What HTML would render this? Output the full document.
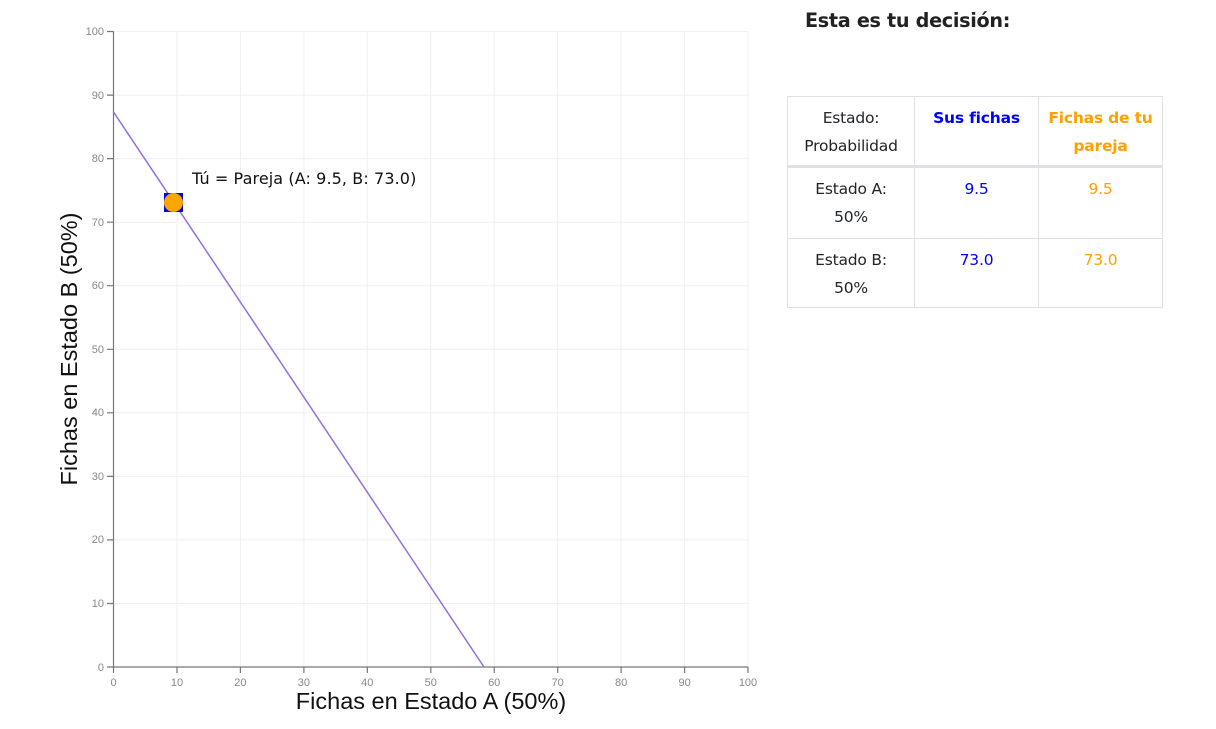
<!DOCTYPE html>
<html><head><meta charset="utf-8"><style>
body{margin:0;background:#fff;width:1216px;height:729px;overflow:hidden;position:relative;font-family:"DejaVu Sans","Liberation Sans",sans-serif}
svg{position:absolute;left:0;top:0}
h2{position:absolute;left:805px;top:9px;margin:0;font-size:19.2px;font-weight:bold;color:#222;font-family:"DejaVu Sans",sans-serif;letter-spacing:-0.3px}
.c{position:absolute;text-align:center;font-size:15.5px;line-height:28px;color:#212529;letter-spacing:-0.2px}
.b{color:#0000ff}.o{color:#ffa000}.bo{font-weight:bold}
.hl{position:absolute;background:#dee2e6}
</style></head><body>
<svg width="1216" height="729" font-family="Liberation Sans, sans-serif">
<g stroke="#efefef" stroke-width="1">
<line x1="177" y1="31.5" x2="177" y2="667"/><line x1="240.4" y1="31.5" x2="240.4" y2="667"/><line x1="303.9" y1="31.5" x2="303.9" y2="667"/><line x1="367.3" y1="31.5" x2="367.3" y2="667"/><line x1="430.8" y1="31.5" x2="430.8" y2="667"/><line x1="494.2" y1="31.5" x2="494.2" y2="667"/><line x1="557.7" y1="31.5" x2="557.7" y2="667"/><line x1="621.1" y1="31.5" x2="621.1" y2="667"/><line x1="684.6" y1="31.5" x2="684.6" y2="667"/><line x1="748" y1="31.5" x2="748" y2="667"/>
<line x1="113.5" y1="603.5" x2="748" y2="603.5"/><line x1="113.5" y1="539.9" x2="748" y2="539.9"/><line x1="113.5" y1="476.4" x2="748" y2="476.4"/><line x1="113.5" y1="412.8" x2="748" y2="412.8"/><line x1="113.5" y1="349.3" x2="748" y2="349.3"/><line x1="113.5" y1="285.7" x2="748" y2="285.7"/><line x1="113.5" y1="222.2" x2="748" y2="222.2"/><line x1="113.5" y1="158.6" x2="748" y2="158.6"/><line x1="113.5" y1="95.1" x2="748" y2="95.1"/><line x1="113.5" y1="31.5" x2="748" y2="31.5"/>
</g>
<g stroke="#777" stroke-width="1.2" fill="none">
<path d="M113.5 31.5V667H748"/>
<path d="M107 31.5h6.5M107 95.1h6.5M107 158.6h6.5M107 222.2h6.5M107 285.7h6.5M107 349.3h6.5M107 412.8h6.5M107 476.4h6.5M107 539.9h6.5M107 603.5h6.5M107 667h6.5"/>
<path d="M113.5 667v6M177 667v6M240.4 667v6M303.9 667v6M367.3 667v6M430.8 667v6M494.2 667v6M557.7 667v6M621.1 667v6M684.6 667v6M748 667v6"/>
</g>
<g fill="#888" font-size="11" text-anchor="end">
<text x="104" y="35">100</text><text x="104" y="99">90</text><text x="104" y="162">80</text><text x="104" y="226">70</text><text x="104" y="289">60</text><text x="104" y="353">50</text><text x="104" y="416">40</text><text x="104" y="480">30</text><text x="104" y="543">20</text><text x="104" y="607">10</text><text x="104" y="671">0</text>
</g>
<g fill="#888" font-size="11" text-anchor="middle">
<text x="113.5" y="686">0</text><text x="177" y="686">10</text><text x="240.4" y="686">20</text><text x="303.9" y="686">30</text><text x="367.3" y="686">40</text><text x="430.8" y="686">50</text><text x="494.2" y="686">60</text><text x="557.7" y="686">70</text><text x="621.1" y="686">80</text><text x="684.6" y="686">90</text><text x="748" y="686">100</text>
</g>
<text x="431" y="709" font-size="23.5" text-anchor="middle" fill="#111">Fichas en Estado A (50%)</text>
<text transform="translate(77,349) rotate(-90)" font-size="23.5" text-anchor="middle" fill="#111">Fichas en Estado B (50%)</text>
<line x1="113.5" y1="112" x2="484" y2="667" stroke="#9370db" stroke-width="1.5"/>
<rect x="164" y="193" width="19" height="19" fill="#0000ff"/>
<circle cx="173.5" cy="202.5" r="9.5" fill="#ffa500"/>
<text x="192" y="184" font-size="16" fill="#111" font-family="DejaVu Sans, sans-serif" letter-spacing="0.1">Tú = Pareja (A: 9.5, B: 73.0)</text>
</svg>
<h2>Esta es tu decisión:</h2>
<div class="hl" style="left:787px;top:96px;width:376px;height:1px"></div>
<div class="hl" style="left:787px;top:165px;width:376px;height:3px"></div>
<div class="hl" style="left:787px;top:238px;width:376px;height:1px"></div>
<div class="hl" style="left:787px;top:307px;width:376px;height:1px"></div>
<div class="hl" style="left:787px;top:96px;width:1px;height:212px"></div>
<div class="hl" style="left:914px;top:96px;width:1px;height:212px"></div>
<div class="hl" style="left:1038px;top:96px;width:1px;height:212px"></div>
<div class="hl" style="left:1162px;top:96px;width:1px;height:212px"></div>
<div class="c" style="left:788px;top:104px;width:126px">Estado:<br>Probabilidad</div>
<div class="c b bo" style="left:915px;top:104px;width:123px">Sus fichas</div>
<div class="c o bo" style="left:1039px;top:104px;width:123px">Fichas de tu<br>pareja</div>
<div class="c" style="left:788px;top:175px;width:126px">Estado A:<br>50%</div>
<div class="c b" style="left:915px;top:175px;width:123px">9.5</div>
<div class="c o" style="left:1039px;top:175px;width:123px">9.5</div>
<div class="c" style="left:788px;top:246px;width:126px">Estado B:<br>50%</div>
<div class="c b" style="left:915px;top:246px;width:123px">73.0</div>
<div class="c o" style="left:1039px;top:246px;width:123px">73.0</div>
</body></html>
